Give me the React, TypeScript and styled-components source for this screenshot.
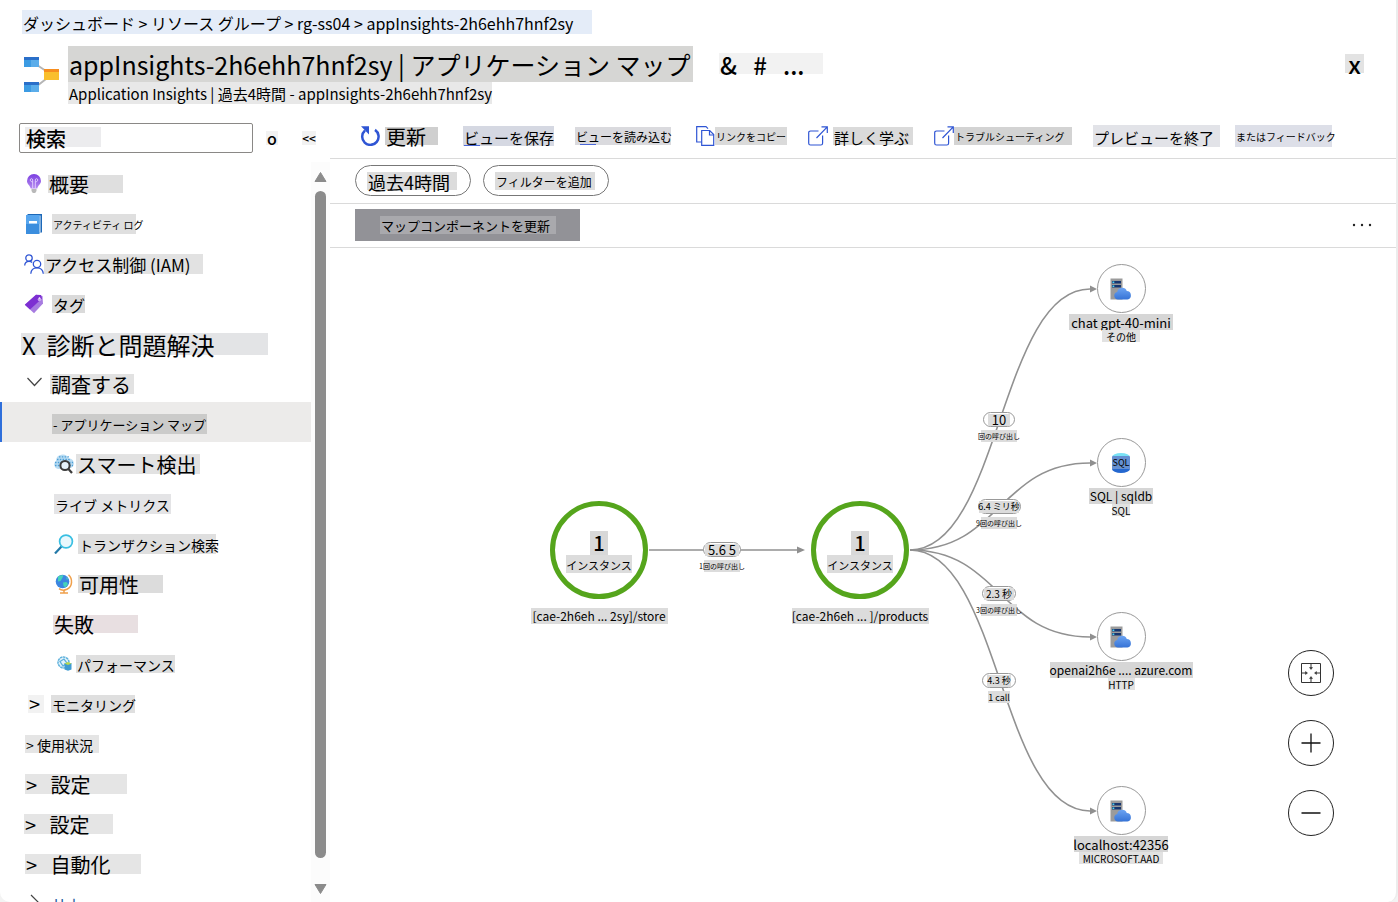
import React from "react";
import styled, { createGlobalStyle } from "styled-components";

const GlobalStyle = createGlobalStyle`
  *, *::before, *::after { box-sizing: border-box; }
  body {
    margin: 0;
    background: #f3f3f3;
    color: #000;
    font-family: "Noto Sans CJK JP", "Noto Sans", sans-serif;
  }
  button, input { font-family: inherit; color: inherit; }
`;

const Page = styled.div`
  display: flex;
  flex-direction: column;
  height: 100vh;
  overflow: hidden;
  background: #fff;
  border-right: 2px solid #ececec;
  border-radius: 0 0 10px 10px;
`;

const Chip = styled.span<{ $w: number; $h?: number; $size: number; $bg?: string; $weight?: number; $center?: boolean }>`
  display: flex;
  flex: none;
  align-items: center;
  justify-content: ${(p) => (p.$center ? "center" : "flex-start")};
  width: ${(p) => p.$w}px;
  height: ${(p) => p.$h ?? 20}px;
  padding-left: ${(p) => (p.$center ? 0 : 1)}px;
  background: ${(p) => p.$bg ?? "#dfdfdf"};
  font-size: ${(p) => p.$size}px;
  font-weight: ${(p) => p.$weight ?? 400};
  line-height: 1;
  white-space: nowrap;
`;

const LabelChip = styled(Chip)`
  padding-top: 2px;
  white-space: pre;
`;

const Breadcrumb = styled.nav`
  display: flex;
  padding: 10px 22px 0;
  a { color: inherit; text-decoration: none; }
`;

const Header = styled.header`
  display: flex;
  flex: none;
  padding: 12px 32px 0 22px;
  height: 84px;
`;

const Logo = styled.svg`
  flex: none;
  width: 38px;
  height: 38px;
  margin: 10px 8px 0 0;
`;

const Titles = styled.div`
  h1, p { margin: 0; }
`;

const TitleTools = styled.div`
  margin: 7px auto 0 26px;
`;

const PlainButton = styled.button`
  display: flex;
  align-items: center;
  padding: 0;
  border: 0;
  background: none;
  cursor: pointer;
`;

const CloseButton = styled(PlainButton)`
  align-self: flex-start;
  margin-top: 8px;
`;

const Body = styled.div`
  display: flex;
  flex: 1;
  min-height: 0;
`;

const Sidebar = styled.aside`
  display: flex;
  flex-direction: column;
  flex: none;
  width: 330px;
`;

const SearchRow = styled.div`
  display: flex;
  align-items: center;
  flex: none;
  height: 44px;
  padding: 0 0 4px 19px;
`;

const SearchInput = styled.input`
  width: 234px;
  height: 30px;
  margin-right: 13px;
  padding: 0 6px;
  border: 1px solid #8a8886;
  border-radius: 2px;
  background: linear-gradient(#ececee, #ececee) 5px 3px / 76px 20px no-repeat;
  font-size: 20px;
  font-weight: 500;
  &::placeholder { color: #000; opacity: 1; }
`;

const SearchActions = styled.div`
  display: flex;
  gap: 24px;
`;

const NavArea = styled.div`
  display: flex;
  flex: 1;
  min-height: 0;
`;

const NavList = styled.ul`
  flex: 1;
  margin: 0;
  padding: 0;
  overflow: hidden;
  list-style: none;
`;

const NavLink = styled.a<{ $active?: boolean; $pad: number; $gap: number }>`
  display: flex;
  align-items: center;
  gap: ${(p) => p.$gap}px;
  height: 40px;
  padding: 3px 0 0 ${(p) => p.$pad}px;
  background: ${(p) => (p.$active ? "#ecebea" : "none")};
  box-shadow: ${(p) => (p.$active ? "inset 2px 0 #2f6fdb" : "none")};
  color: inherit;
  text-decoration: none;
  svg { flex: none; }
`;

const ScrollTrack = styled.div`
  display: flex;
  flex-direction: column;
  align-items: center;
  flex: none;
  width: 19px;
  padding: 10px 0 8px;
  background: #fcfcfc;
`;

const ScrollThumb = styled.div`
  flex: 1;
  width: 11px;
  margin: 9px 0 26px;
  border-radius: 6px;
  background: #8b8b8b;
`;

const Main = styled.main`
  display: flex;
  flex-direction: column;
  flex: 1;
  min-width: 0;
`;

const Bar = styled.div<{ $h: number }>`
  display: flex;
  align-items: center;
  flex: none;
  height: ${(p) => p.$h}px;
  padding: 0 24px 2px 25px;
  border-bottom: 1px solid #dadada;
`;

const Toolbar = styled(Bar)`
  gap: 21px;
  padding: 0 0 4px 30px;
`;

const ToolButton = styled(PlainButton)<{ $gap?: number; $after?: number }>`
  gap: ${(p) => p.$gap ?? 0}px;
  margin-right: ${(p) => p.$after ?? 0}px;
`;

const ToolGroup = styled.div`
  display: flex;
  gap: 15px;
`;

const ViewChip = styled(LabelChip)<{ $mark: number }>`
  background: linear-gradient(#4a67d8, #4a67d8) ${(p) => p.$mark}px 100% / 16px 1px no-repeat, ${(p) => p.$bg};
`;

const Pill = styled(PlainButton)`
  justify-content: flex-start;
  height: 31px;
  margin-right: 12px;
  padding: 2px 13px 0 11px;
  border: 1px solid #777;
  border-radius: 16px;
`;

const UpdateButton = styled(PlainButton)`
  height: 32px;
  margin-right: auto;
  padding: 0 24px 0 25px;
  background: #929297;
`;

const Canvas = styled.section`
  position: relative;
  flex: 1;
  min-height: 0;
  overflow: hidden;
`;

const Edges = styled.svg`
  position: absolute;
  inset: 0;
`;

const Placed = styled.div<{ $x: number; $y: number }>`
  position: absolute;
  left: ${(p) => p.$x}px;
  top: ${(p) => p.$y}px;
  display: flex;
  flex-direction: column;
  align-items: center;
  width: 160px;
  margin-left: -80px;
`;

const AppCircle = styled.div`
  display: flex;
  flex-direction: column;
  align-items: center;
  width: 98px;
  height: 98px;
  margin-bottom: 9px;
  padding-top: 25px;
  border: 5px solid #55a51c;
  border-radius: 50%;
  background: #fff;
`;

const DependencyCircle = styled.div`
  display: flex;
  align-items: center;
  justify-content: center;
  width: 49px;
  height: 49px;
  margin-bottom: 1px;
  border: 1px solid #999;
  border-radius: 50%;
  background: #fff;
`;

const Duration = styled.div<{ $w: number }>`
  display: flex;
  align-items: center;
  justify-content: center;
  width: ${(p) => p.$w}px;
  height: 15px;
  margin-bottom: 3px;
  border: 1px solid #999;
  border-radius: 8px;
  background: #fff;
`;

const ZoomControls = styled.div`
  position: absolute;
  right: 62px;
  bottom: 66px;
  display: flex;
  flex-direction: column;
  gap: 24px;
`;

const RoundButton = styled(PlainButton)`
  justify-content: center;
  width: 46px;
  height: 46px;
  border: 1px solid #222;
  border-radius: 50%;
  background: #fff;
`;

const BulbIcon = () => (
  <svg width="20" height="20" viewBox="0 0 20 20">
    <defs>
      <linearGradient id="bulb" x1="0" y1="0" x2="0" y2="1">
        <stop offset="0" stopColor="#7b3fe0" />
        <stop offset="1" stopColor="#b48af0" />
      </linearGradient>
    </defs>
    <path d="M10 0a7 7 0 0 0-7 7c0 3.300 3.100 4.300 3.700 7.500h6.600C13.900 11.300 17 10.300 17 7a7 7 0 0 0-7-7z" fill="url(#bulb)" />
    <path d="M8.700 14V8M11.300 14V8M8.700 8c-3 0-3-3.500-1-3.300 1.200.2 1 2 1 3.300zM11.300 8c3 0 3-3.500 1-3.300-1.200.2-1 2-1 3.300z" fill="none" stroke="#e6d5ff" strokeWidth=".9" />
    <path d="M7.500 15h5v2L11.200 19H8.800l-1.300-2z" fill="#b9b9b9" />
  </svg>
);

const BookIcon = () => (
  <svg width="20" height="20" viewBox="0 0 20 20">
    <path d="M3.500 0H18v18.500H3.500z" fill="#1c68b8" />
    <path d="M3.500 1.500h13v17h-13z" fill="#e8f3fd" />
    <path d="M2 1h13.500v19H2z" fill="#3b8ede" />
    <path d="M2 1h13.500v9H2z" fill="#56a5ee" />
    <path d="M5 7h8v2.500H5z" fill="#fff" />
  </svg>
);

const PeopleIcon = () => (
  <svg width="20" height="20" viewBox="0 0 20 20" fill="none" stroke="#2f55d4" strokeWidth="1.300">
    <circle cx="5" cy="4" r="3.200" />
    <path d="M.7 11.500C.8 8.700 2.600 7.300 5 7.300c1.400 0 2.400.4 3.200 1.200" />
    <circle cx="13" cy="10" r="3.700" />
    <path d="M6.800 19.800c.2-3.700 2.700-6 6.200-6s6 2.300 6.300 6" />
  </svg>
);

const TagIcon = () => (
  <svg width="20" height="20" viewBox="0 0 20 20">
    <path d="M12 .8 18.500 2l.5 7.500L10 19.200.8 10.800z" fill="#a77be0" />
    <path d="M12 .8 17 1l1 3.500L6 15.500.8 10.800z" fill="#7d2fd2" />
    <circle cx="15.500" cy="5.500" r="1.800" fill="#c9a5f2" />
    <circle cx="15.500" cy="4" r=".8" fill="#fff" />
  </svg>
);

const ChevronDown = () => (
  <svg width="20" height="20" viewBox="0 0 20 20" fill="none" stroke="#444" strokeWidth="1.200">
    <path d="M3.500 4 10.500 11.500 17.500 4" />
  </svg>
);

const ChevronRight = () => (
  <svg width="20" height="20" viewBox="0 0 20 20" fill="none" stroke="#444" strokeWidth="1.200">
    <path d="M7 1 15 9 7 17" />
  </svg>
);

const SmartIcon = () => (
  <svg width="20" height="20" viewBox="0 0 20 20">
    <path d="M4 15A4.500 4.500 0 0 1 2 7 6.500 6.500 0 0 1 14.500 4.500 5 5 0 0 1 17 14" fill="#b9dcf3" />
    <path d="M3 5.500h14M1 8.500h18M1 11.500h18M5 2.800h10" stroke="#4c9ed6" strokeWidth="1.300" strokeDasharray="1.500 1.300" />
    <circle cx="11" cy="11.500" r="4.600" fill="#e6f3fc" stroke="#3c3c3c" strokeWidth="2" />
    <path d="m14 14.500 4 4.500" stroke="#3c3c3c" strokeWidth="2.200" />
  </svg>
);

const MagnifierIcon = () => (
  <svg width="20" height="20" viewBox="0 0 20 20" fill="none">
    <path d="m7.500 12.500-6.500 7" stroke="#2379a8" strokeWidth="2.200" />
    <circle cx="12" cy="7.500" r="6.400" fill="#e9f8fd" stroke="#39bfe2" strokeWidth="1.700" />
  </svg>
);

const GlobeIcon = () => (
  <svg width="20" height="20" viewBox="0 0 20 20">
    <path d="M14.500.8c4.500 4 4 12-1.500 14.500-3 1.300-6 .9-8-.6" fill="none" stroke="#f0a04b" strokeWidth="1.500" />
    <path d="M10 16v2.500M6 19h8" stroke="#f0a04b" strokeWidth="1.500" />
    <circle cx="8.500" cy="7.500" r="6.800" fill="#3b86e0" />
    <path d="M4 2.500c2-1 4-1.500 5.500-1L8 4.500 6.500 7 4 7.500zM9 8.500l3.500-.5 1.500 2-2.500 3.500-2-1.500zM12 3l2 1.500-1 1.500z" fill="#47d3b8" />
  </svg>
);

const PerformanceIcon = () => (
  <svg width="15" height="15" viewBox="0 0 15 15">
    <circle cx="6.500" cy="6.500" r="5.500" fill="#e4f3fb" stroke="#5eb1dc" strokeWidth="1.500" strokeDasharray="2.500 .6" />
    <path d="M3 5.500 7 3l3 4-4 3z" fill="none" stroke="#5eb1dc" strokeWidth="1.300" />
    <path d="M7.500 7h7v6.500l-3.500 1.300-3.500-1.300z" fill="#3f9bd1" />
    <path d="M7.500 7.500 11 6l3.500 1.500L11 9z" fill="#b9d94c" />
  </svg>
);

const RefreshIcon = () => (
  <svg width="20" height="20" viewBox="0 0 20 20" fill="none">
    <path d="M5 4.500a8.200 8.200 0 1 0 10-.6" stroke="#2f55d4" strokeWidth="2.500" />
    <path d="M1 .3h8V8.500z" fill="#2f55d4" />
  </svg>
);

const CopyIcon = () => (
  <svg width="19" height="20" viewBox="0 0 19 20" fill="none" stroke="#2f55d4" strokeWidth="1.200">
    <path d="M5.500 16H.7V.7H10l2 2" />
    <path d="M5.700 4.500h8l4 4v10.800h-12z" fill="#fff" />
    <path d="M13.500 4.500V9h4.200" />
  </svg>
);

const ExternalIcon = () => (
  <svg width="20" height="20" viewBox="0 0 20 20" fill="none" stroke="#2f55d4" strokeWidth="1.200">
    <path d="M10.500 5H2.500C1.300 5 .7 5.700.7 6.800v10.400c0 1.200.7 1.800 1.800 1.800h10.300c1.200 0 1.800-.7 1.800-1.800V9.500" />
    <path d="M8.500 12 19.300.8M13.500.8h5.800V7" />
  </svg>
);

const ServerIcon = () => (
  <svg width="22" height="22" viewBox="0 0 22 22">
    <defs>
      <linearGradient id="cloud" x1="0" y1="0" x2="0" y2="1">
        <stop offset="0" stopColor="#6ba3f2" />
        <stop offset="1" stopColor="#3673d6" />
      </linearGradient>
    </defs>
    <path d="M.5.500h12V21.500H.5z" fill="#9b9b9b" />
    <path d="M2 3h9v2.500H2zM2 7h9v2.500H2z" fill="#17366f" />
    <path d="M2.500 3.500h1.800v1.500H2.500zM2.500 7.500h1.800V9H2.500z" fill="#50d5f2" />
    <path d="M8 21.500a3.800 3.800 0 0 1-.8-7.500 5 5 0 0 1 9.600-1 4.300 4.300 0 0 1 .7 8.500z" fill="url(#cloud)" />
  </svg>
);

const SqlBadge = styled.div`
  display: flex;
  align-items: center;
  justify-content: center;
  width: 18px;
  height: 20px;
  border-radius: 9px / 4px;
  background: linear-gradient(#79e2f5 0 3px, #6590d2 3px 16px, #2467cf 16px);
  font-size: 9px;
`;

const FitIcon = () => (
  <svg width="20" height="20" viewBox="0 0 20 20" fill="none" stroke="#333" strokeWidth="1">
    <path d="M.5.500h19v19H.5zM10 .5v5M10 19.500v-5M.5 10h5M19.500 10h-5" />
    <path d="M8.500 4.500h3L10 6.500zM8.500 15.500h3L10 13.500zM4.500 8.500v3L6.500 10zM15.500 8.500v3L13.500 10z" fill="#333" strokeWidth=".5" />
  </svg>
);

const PlusIcon = () => (
  <svg width="20" height="20" viewBox="0 0 20 20" stroke="#111" strokeWidth="1.300">
    <path d="M.5 10h19M10 .5v19" />
  </svg>
);

const MinusIcon = () => (
  <svg width="20" height="20" viewBox="0 0 20 20" stroke="#111" strokeWidth="1.300">
    <path d="M.5 10h19" />
  </svg>
);

const Triangle = ({ down }: { down?: boolean }) => (
  <svg width="13" height="10" viewBox="0 0 13 10">
    <path d={down ? "M1 .5h11L6.500 9.500z" : "M1 9.500h11L6.500.5z"} fill="#8b8b8b" stroke="#8b8b8b" strokeLinejoin="round" />
  </svg>
);

type NavItem = {
  text: string;
  w: number;
  size: number;
  pad: number;
  gap?: number;
  h?: number;
  bg?: string;
  icon?: React.ReactNode;
  active?: boolean;
};

const navItems: NavItem[] = [
  { text: "概要", w: 75, h: 18, size: 20, pad: 24, gap: 4, icon: <BulbIcon /> },
  { text: "アクティビティ ログ", w: 84, size: 10, pad: 24, gap: 8, icon: <BookIcon /> },
  { text: "アクセス制御 (IAM)", w: 159, size: 17, pad: 24, icon: <PeopleIcon />, bg: "#e2e2e2" },
  { text: "タグ", w: 33, h: 18, size: 16, pad: 24, gap: 8, icon: <TagIcon />, bg: "#dadada" },
  { text: "X  診断と問題解決", w: 247, h: 22, size: 24, pad: 21, bg: "#e3e4e6" },
  { text: "調査する", w: 84, size: 20, pad: 24, gap: 6, icon: <ChevronDown />, bg: "#e2e2e2" },
  { text: "- アプリケーション マップ", w: 155, size: 13, pad: 52, bg: "#cbcbca", active: true },
  { text: "スマート検出", w: 124, size: 20, pad: 54, gap: 2, icon: <SmartIcon />, bg: "#e2e2e2" },
  { text: "ライブ メトリクス", w: 117, size: 14, pad: 54, bg: "#e4e4e6" },
  { text: "トランザクション検索", w: 138, size: 14, pad: 54, gap: 4, icon: <MagnifierIcon /> },
  { text: "可用性", w: 85, h: 18, size: 20, pad: 54, gap: 4, icon: <GlobeIcon />, bg: "#dcdcdc" },
  { text: "失敗", w: 85, h: 18, size: 20, pad: 53, bg: "#e8dfe1" },
  { text: "パフォーマンス", w: 99, h: 18, size: 14, pad: 57, gap: 4, icon: <PerformanceIcon /> },
  { text: "モニタリング", w: 84, h: 18, size: 14, pad: 28, gap: 7, icon: <Chip $w={16} $h={18} $size={20} $bg="#f2f2f2">&gt;</Chip> },
  { text: "> 使用状況", w: 74, h: 18, size: 14, pad: 25, bg: "#e5e5e5" },
  { text: ">   設定", w: 102, size: 20, pad: 25, bg: "#e5e5e5" },
  { text: ">   設定", w: 89, size: 20, pad: 24, bg: "#e5e5e5" },
  { text: ">   自動化", w: 116, size: 20, pad: 25, bg: "#e5e5e5" },
];

const HelpText = styled.span`
  color: #1d5b9e;
  font-size: 14px;
  line-height: 1;
`;

const dependencies = [
  { y: 16, icon: <ServerIcon />, name: "chat gpt-40-mini", w: 104, size: 13, kind: "その他", kw: 38, ks: 10 },
  { y: 190, icon: <SqlBadge>SQL</SqlBadge>, name: "SQL | sqldb", w: 64, size: 12, kind: "SQL", kw: 18, ks: 10 },
  { y: 364, icon: <ServerIcon />, name: "openai2h6e .... azure.com", w: 143, size: 12, kind: "HTTP", kw: 27, ks: 10 },
  { y: 538, icon: <ServerIcon />, name: "localhost:42356", w: 94, size: 13, kind: "MICROSOFT.AAD", kw: 84, ks: 10 },
];

const calls = [
  { x: 392, y: 294, w: 38, time: "5.6 5", tw: 34, size: 13, count: "1回の呼び出し" },
  { x: 669, y: 164, w: 32, time: "10", tw: 22, size: 13, count: "回の呼び出し" },
  { x: 669, y: 251, w: 43, time: "6.4 ミリ秒", tw: 40, size: 9, count: "9回の呼び出し" },
  { x: 669, y: 338, w: 34, time: "2.3 秒", tw: 30, size: 10, count: "3回の呼び出し" },
  { x: 669, y: 425, w: 34, time: "4.3 秒", tw: 24, size: 9, count: "1 call" },
];

const apps = [
  { x: 269, name: "[cae-2h6eh ... 2sy]/store" },
  { x: 530, name: "[cae-2h6eh ... ]/products" },
];

export default function App() {
  return (
    <>
      <GlobalStyle />
      <Page>
        <Breadcrumb aria-label="breadcrumb">
          <LabelChip $w={570} $h={24} $size={16} $bg="#e4ecf8">
            <a href="#dashboard">ダッシュボード</a>{" > "}
            <a href="#groups">リソース グループ</a>{" > "}
            <a href="#rg">rg-ss04</a>{" > "}
            <a href="#insights">appInsights-2h6ehh7hnf2sy</a>
          </LabelChip>
        </Breadcrumb>
        <Header>
          <Logo viewBox="0 0 38 38">
            <path d="M15 9 24 15M15 30l9-7" stroke="#b5b5b5" strokeWidth="2" />
            <path d="M2 1h15v10H2zM2 26h15v10H2z" fill="#3c9be3" />
            <path d="M9 1h8v10H9zM9 26h8v10H9z" fill="#5badea" />
            <path d="M2 1h15v3H2zM2 26h15v3H2z" fill="#2a6fc9" />
            <path d="M22 13h15v11H22z" fill="#f9bf2c" />
            <path d="M22 13h15v3H22z" fill="#f78d1e" />
          </Logo>
          <Titles>
            <Chip as="h1" $w={625} $h={36} $size={25} $bg="#d6d6d4">appInsights-2h6ehh7hnf2sy | アプリケーション マップ</Chip>
            <Chip as="p" $w={424} $h={22} $size={15} $bg="#e8e8e8">Application Insights | 過去4時間 - appInsights-2h6ehh7hnf2sy</Chip>
          </Titles>
          <TitleTools>
            <PlainButton>
              <LabelChip $w={104} $h={21} $size={24} $weight={500} $bg="#f2f2f2">{"&   #   ..."}</LabelChip>
            </PlainButton>
          </TitleTools>
          <CloseButton>
            <Chip $w={19} $h={19} $size={24} $weight={500} $bg="#e3e3e3" $center>x</Chip>
          </CloseButton>
        </Header>
        <Body>
          <Sidebar>
            <SearchRow>
              <SearchInput aria-label="検索" placeholder="検索" />
              <SearchActions>
                <PlainButton><Chip $w={12} $h={14} $size={16} $weight={500} $bg="#f2f2f2" $center>o</Chip></PlainButton>
                <PlainButton><Chip $w={14} $h={14} $size={12} $weight={500} $bg="#f2f2f2" $center>&lt;&lt;</Chip></PlainButton>
              </SearchActions>
            </SearchRow>
            <NavArea>
              <NavList>
                {navItems.map((item, i) => (
                  <li key={i}>
                    <NavLink href="#nav" $pad={item.pad} $gap={item.gap ?? 0} $active={item.active}>
                      {item.icon}
                      <LabelChip $w={item.w} $h={item.h} $size={item.size} $bg={item.bg}>{item.text}</LabelChip>
                    </NavLink>
                  </li>
                ))}
                <li>
                  <NavLink href="#help" $pad={24} $gap={10}>
                    <ChevronRight />
                    <HelpText>Help</HelpText>
                  </NavLink>
                </li>
              </NavList>
              <ScrollTrack>
                <Triangle />
                <ScrollThumb />
                <Triangle down />
              </ScrollTrack>
            </NavArea>
          </Sidebar>
          <Main>
            <Toolbar $h={41}>
              <ToolButton $gap={5} $after={4}><RefreshIcon /><LabelChip $w={53} $h={18} $size={20} $bg="#cfcfcf">更新</LabelChip></ToolButton>
              <ToolButton><ViewChip $mark={1} $w={91} $size={15} $bg="#d5d8e2">ビューを保存</ViewChip></ToolButton>
              <ToolButton $after={4}><ViewChip $mark={5} $w={96} $h={18} $size={12} $bg="#dadade">ビューを読み込む</ViewChip></ToolButton>
              <ToolButton><CopyIcon /><LabelChip $w={72} $h={18} $size={10} $bg="#dadada">リンクをコピー</LabelChip></ToolButton>
              <ToolButton $gap={5}><ExternalIcon /><LabelChip $w={80} $h={18} $size={15} $bg="#dadada">詳しく学ぶ</LabelChip></ToolButton>
              <ToolButton><ExternalIcon /><LabelChip $w={118} $h={18} $size={10} $bg="#d3d3d3">トラブルシューティング</LabelChip></ToolButton>
              <ToolGroup>
                <ToolButton><LabelChip $w={127} $h={22} $size={15} $bg="#e2e3e8">プレビューを終了</LabelChip></ToolButton>
                <ToolButton><LabelChip $w={97} $h={22} $size={10} $bg="#dddfe8">またはフィードバック</LabelChip></ToolButton>
              </ToolGroup>
            </Toolbar>
            <Bar $h={45}>
              <Pill><LabelChip $w={90} $h={18} $size={18} $bg="#dcdcdc">過去4時間</LabelChip></Pill>
              <Pill><LabelChip $w={100} $h={18} $size={12} $bg="#dcdcdc">フィルターを追加</LabelChip></Pill>
            </Bar>
            <Bar $h={44}>
              <UpdateButton><LabelChip $w={176} $h={18} $size={13} $bg="#a9a9ad">マップコンポーネントを更新</LabelChip></UpdateButton>
              <PlainButton aria-label="…">
                <svg width="20" height="4" viewBox="0 0 20 4" fill="#222">
                  <circle cx="2" cy="2" r="1.200" /><circle cx="10" cy="2" r="1.200" /><circle cx="18" cy="2" r="1.200" />
                </svg>
              </PlainButton>
            </Bar>
            <Canvas>
              <Edges width="820" height="650" fill="none" stroke="#919191" strokeWidth="1.600">
                <path d="M319 302H470" />
                <path d="M580 302C670 302 670 41 760 41" />
                <path d="M580 302C670 302 670 215 760 215" />
                <path d="M580 302C670 302 670 389 760 389" />
                <path d="M580 302C670 302 670 563 760 563" />
                <path
                  d="M467 298.500v7l8-3.500zM760 37.500v7l7-3.500zM760 211.500v7l7-3.500zM760 385.500v7l7-3.500zM760 559.500v7l7-3.500z"
                  fill="#8f8f8f"
                  stroke="none"
                />
              </Edges>
              {apps.map((a) => (
                <Placed key={a.x} $x={a.x} $y={253}>
                  <AppCircle>
                    <Chip $w={18} $h={24} $size={20} $weight={500} $bg="#d8d8d8" $center>1</Chip>
                    <LabelChip $w={66} $h={18} $size={11} $bg="#dcdcdc" $center>インスタンス</LabelChip>
                  </AppCircle>
                  <Chip $w={137} $h={16} $size={12} $bg="#dcdcdc" $center>{a.name}</Chip>
                </Placed>
              ))}
              {dependencies.map((d) => (
                <Placed key={d.name} $x={791} $y={d.y}>
                  <DependencyCircle>{d.icon}</DependencyCircle>
                  <Chip $w={d.w} $h={16} $size={d.size} $bg="#d6d6d6" $center>{d.name}</Chip>
                  <LabelChip $w={d.kw} $h={12} $size={d.ks} $bg="#e2e2e2" $center>{d.kind}</LabelChip>
                </Placed>
              ))}
              {calls.map((c) => (
                <Placed key={c.y} $x={c.x} $y={c.y}>
                  <Duration $w={c.w}>
                    <Chip $w={c.tw} $h={12} $size={c.size} $bg="#dcdcdc" $center>{c.time}</Chip>
                  </Duration>
                  <Chip $w={c.count === "1 call" ? 22 : 36} $h={12} $size={c.count === "1 call" ? 9 : 7} $bg="#dcdcdc" $center>{c.count}</Chip>
                </Placed>
              ))}
              <ZoomControls>
                <RoundButton aria-label="全体表示"><FitIcon /></RoundButton>
                <RoundButton aria-label="拡大"><PlusIcon /></RoundButton>
                <RoundButton aria-label="縮小"><MinusIcon /></RoundButton>
              </ZoomControls>
            </Canvas>
          </Main>
        </Body>
      </Page>
    </>
  );
}
